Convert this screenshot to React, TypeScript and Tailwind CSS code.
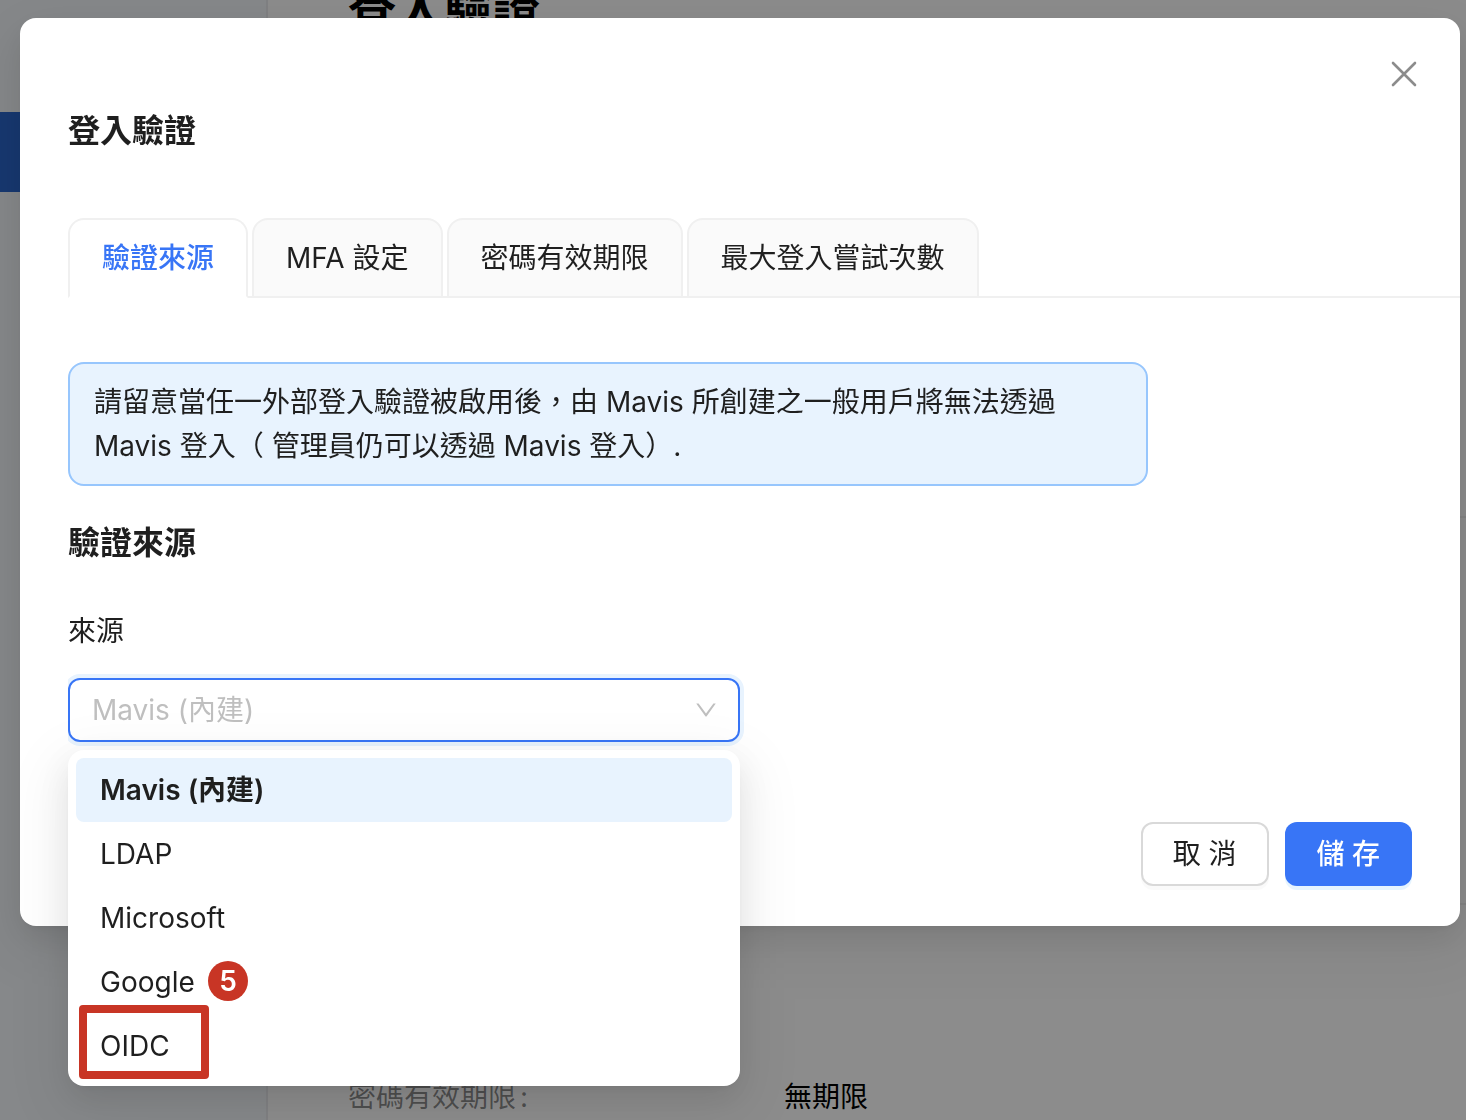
import clsx from 'clsx';
import { useState } from 'react';
import { AiOutlineDown } from 'react-icons/ai';

const tabs = [
  { id: 'source', label: '驗證來源' },
  { id: 'mfa', label: 'MFA 設定' },
  { id: 'expiry', label: '密碼有效期限' },
  { id: 'attempts', label: '最大登入嘗試次數' },
];

const sources = [
  { id: 'mavis', label: 'Mavis (內建)' },
  { id: 'ldap', label: 'LDAP' },
  { id: 'microsoft', label: 'Microsoft' },
  { id: 'google', label: 'Google' },
  { id: 'oidc', label: 'OIDC' },
];

function SettingsPage() {
  return (
    <div className="fixed inset-0 flex overflow-hidden bg-white" aria-hidden="true">
      <aside className="w-[268px] shrink-0 border-r-2 border-[#eaebef] bg-[#f5f7fb] pt-28">
        <div className="h-20 bg-[#2b66cc]" />
      </aside>
      <main className="flex-1">
        {/* page is scrolled a little, so the heading starts above the window */}
        <header className="flow-root h-[516px] pl-20">
          <h1 className="-mt-[18px] text-5xl leading-[56px] font-bold text-black">登入驗證</h1>
        </header>
        <section className="h-[387px] border-t-2 border-[#f0f0f0]" />
        <section className="border-t-2 border-[#f0f0f0] pt-[170px] pl-20">
          <dl className="flex leading-11">
            <dt className="flex w-[436px] gap-1 text-black/45">
              密碼有效期限<span>:</span>
            </dt>
            <dd className="text-black">無期限</dd>
          </dl>
        </section>
      </main>
    </div>
  );
}

function Tabs({ active, onChange }: { active: string; onChange: (id: string) => void }) {
  return (
    <div
      role="tablist"
      className="-mr-12 mt-[63px] flex gap-1 shadow-[inset_0_-2px_0_#f0f0f0]"
    >
      {tabs.map((tab) => (
        <button
          key={tab.id}
          type="button"
          role="tab"
          aria-selected={tab.id === active}
          onClick={() => onChange(tab.id)}
          className={clsx(
            'rounded-t-2xl border-2 border-[#f0f0f0] px-8 py-4 leading-11 whitespace-nowrap',
            tab.id === active ? 'border-b-white bg-white font-medium text-[#3875f6]' : 'bg-[#fafafa]',
          )}
        >
          {tab.label}
        </button>
      ))}
    </div>
  );
}

function SourceSelect() {
  const [value, setValue] = useState('mavis');

  return (
    <div className="relative mt-[25px] max-w-[672px]">
      <div className="relative [clip-path:inset(-4px_-4px_-4px_0)]">
        <select
          id="source"
          value={value}
          onChange={(e) => setValue(e.target.value)}
          className="block h-16 w-full appearance-none rounded-xl border-2 border-[#3875f6] bg-white px-[22px] text-[#bfbfbf] ring-4 ring-[#e8f3fe] outline-none"
        >
          {sources.map((source) => (
            <option key={source.id} value={source.id}>
              {source.label}
            </option>
          ))}
        </select>
        <AiOutlineDown
          size={26}
          className="pointer-events-none absolute top-[19px] right-[21px] text-[#bfbfbf]"
        />
      </div>

      <div
        role="listbox"
        aria-label="來源"
        className="absolute top-full right-0 left-0 z-10 mt-2 rounded-2xl bg-white p-2 shadow-[0_12px_32px_0_rgba(0,0,0,0.08),0_6px_12px_-8px_rgba(0,0,0,0.12),0_18px_56px_16px_rgba(0,0,0,0.05)]"
      >
        {sources.map((source) => (
          <div key={source.id} className="relative">
            <button
              type="button"
              role="option"
              aria-selected={source.id === value}
              onClick={() => setValue(source.id)}
              className={clsx(
                'block w-full rounded-lg px-6 py-[10px] text-left leading-11',
                source.id === value && 'bg-[#e8f3fe] font-semibold',
              )}
            >
              {source.label}
            </button>
            {source.id === 'google' && (
              <span className="absolute top-[11px] left-[132px] flex size-10 items-center justify-center rounded-full bg-[#c83525] font-semibold text-white">
                5
              </span>
            )}
            {source.id === 'oidc' && (
              <span className="pointer-events-none absolute -top-[9px] left-[3px] h-[74px] w-[130px] rounded-[4px] border-8 border-[#c83525]" />
            )}
          </div>
        ))}
      </div>
    </div>
  );
}

export default function App() {
  const [activeTab, setActiveTab] = useState('source');

  return (
    <div className="min-h-screen font-['Inter','Noto_Sans_CJK_TC',sans-serif] text-[28px] text-[#1f1f1f]">
      <SettingsPage />
      <div className="fixed inset-0 bg-black/45" />

      <div className="relative pt-[18px] pr-[6px] pl-5">
        <div
          role="dialog"
          aria-labelledby="dialog-title"
          className="relative rounded-2xl bg-white px-12 pt-[89px] pb-10 shadow-[0_12px_32px_0_rgba(0,0,0,0.08),0_6px_12px_-8px_rgba(0,0,0,0.12),0_18px_56px_16px_rgba(0,0,0,0.05)]"
        >
          <button
            type="button"
            aria-label="關閉"
            className="absolute top-[34px] right-[34px] flex size-11 items-center justify-center text-[#8c8c8c]"
          >
            <svg
              width="28"
              height="28"
              viewBox="0 0 28 28"
              stroke="currentColor"
              strokeWidth="2.6"
              strokeLinecap="round"
            >
              <path d="M3 3 25 25M25 3 3 25" />
            </svg>
          </button>

          <h2 id="dialog-title" className="text-[32px] leading-12 font-semibold">
            登入驗證
          </h2>

          <Tabs active={activeTab} onChange={setActiveTab} />

          <div
            role="alert"
            className="mt-16 max-w-[1080px] rounded-2xl border-2 border-[#97c6fd] bg-[#e8f3fe] px-6 py-4 leading-11"
          >
            請留意當任一外部登入驗證被啟用後，由 Mavis 所創建之一般用戶將無法透過 Mavis 登入（
            管理員仍可以透過 Mavis 登入）.
          </div>

          <h3 className="mt-[33px] text-[32px] leading-12 font-semibold">驗證來源</h3>
          <label htmlFor="source" className="mt-[42px] block leading-11">
            來源
          </label>
          <SourceSelect />

          <div className="mt-20 flex justify-end gap-4">
            <button
              type="button"
              className="h-16 rounded-xl border-2 border-[#d9d9d9] bg-white px-[30px] shadow-[0_4px_0_rgba(0,0,0,0.02)]"
            >
              取 消
            </button>
            <button
              type="button"
              className="h-16 rounded-xl bg-[#3875f6] px-8 font-medium text-white shadow-[0_4px_0_rgba(5,145,255,0.1)]"
            >
              儲 存
            </button>
          </div>
        </div>
      </div>
    </div>
  );
}
